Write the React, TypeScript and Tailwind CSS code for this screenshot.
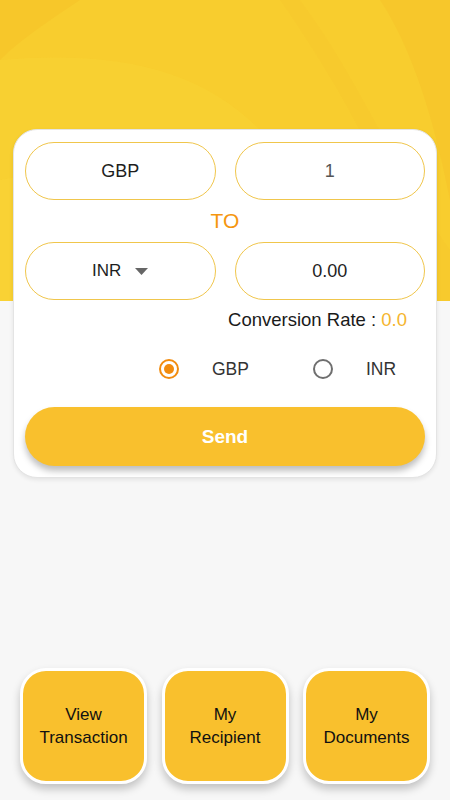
import React from "react";

const font = { fontFamily: '"Liberation Sans", Arial, Helvetica, sans-serif' };

function Field({ children }: { children: React.ReactNode }) {
  return (
    <div className="h-[58px] rounded-full border border-[#f0c64c] flex items-center justify-center text-[18px] text-[#1e1e1e]">
      {children}
    </div>
  );
}

function Radio({ checked }: { checked: boolean }) {
  return checked ? (
    <div className="w-[20px] h-[20px] rounded-full border-[2px] border-[#f28c0f] flex items-center justify-center">
      <div className="w-[10px] h-[10px] rounded-full bg-[#f28c0f]" />
    </div>
  ) : (
    <div className="w-[20px] h-[20px] rounded-full border-[2px] border-[#6f6f6f]" />
  );
}

function Tile({ l1, l2 }: { l1: string; l2: string }) {
  return (
    <div className="w-[127px] h-[116px] rounded-[26px] border-[3px] border-white bg-[#f9c02d] shadow-[0_5px_8px_rgba(0,0,0,0.22)] flex flex-col items-center justify-center text-[17px] leading-[23px] text-[#111]">
      <span>{l1}</span>
      <span>{l2}</span>
    </div>
  );
}

export default function App() {
  return (
    <div style={font} className="relative w-[450px] h-[800px] overflow-hidden bg-[#f7f7f7] flex flex-col">
      <div className="absolute left-0 top-0 w-[450px] h-[301px] bg-[#f8cd2e] overflow-hidden">
        <svg width="450" height="301" viewBox="0 0 450 301" className="absolute left-0 top-0">
          <path d="M0 0 H80 C50 20 20 40 0 60 Z" fill="#f6bf26" opacity="0.4" />
          <path d="M0 60 C120 50 200 70 260 130 C300 170 330 230 340 301 H0 Z" fill="#fad636" opacity="0.35" />
          <path d="M380 0 C420 60 440 150 450 200 V0 Z" fill="#f4bf28" opacity="0.4" />
          <path d="M300 0 C360 80 400 180 450 250 V301 H430 C400 200 350 100 280 0 Z" fill="#f6c52a" opacity="0.3" />
          <path d="M0 180 C100 160 200 200 260 301 H0 Z" fill="#fbd83a" opacity="0.3" />
        </svg>
      </div>

      <div className="relative mt-[129px] mx-[13px] h-[349px] bg-white rounded-[24px] border border-[#e4e4e4] shadow-[0_2px_4px_rgba(0,0,0,0.08)] px-[11px] pt-[12px]">
        <div className="grid grid-cols-2 gap-[19px]">
          <Field>GBP</Field>
          <Field><span className="text-[#555]">1</span></Field>
        </div>
        <div className="h-[42px] flex items-center justify-center text-[21px] text-[#f5960f]">TO</div>
        <div className="grid grid-cols-2 gap-[19px]">
          <Field>
            <span className="text-[17px]">INR</span>
            <svg width="13" height="7" viewBox="0 0 13 7" className="ml-[14px]">
              <path d="M0 0 H13 L6.5 7 Z" fill="#666" />
            </svg>
          </Field>
          <Field>0.00</Field>
        </div>
        <div className="mt-[9px] flex justify-end pr-[18px] text-[18.5px] leading-[22px] text-[#1a1a1a]">
          Conversion Rate :&nbsp;<span className="text-[#f5b52e]">0.0</span>
        </div>
        <div className="mt-[25px] flex items-center pl-[134px] text-[17.5px] text-[#333]">
          <Radio checked />
          <span className="ml-[33px]">GBP</span>
          <span className="ml-[64px]"><Radio checked={false} /></span>
          <span className="ml-[33px]">INR</span>
        </div>
        <div className="mt-[25px] h-[59px] rounded-full bg-[#f9c02d] shadow-[0_5px_6px_rgba(0,0,0,0.25)] flex items-center justify-center text-white text-[19px] font-bold">
          Send
        </div>
      </div>

      <div className="relative mt-auto mb-[16px] px-[20px] flex justify-between">
        <Tile l1="View" l2="Transaction" />
        <Tile l1="My" l2="Recipient" />
        <Tile l1="My" l2="Documents" />
      </div>
    </div>
  );
}
